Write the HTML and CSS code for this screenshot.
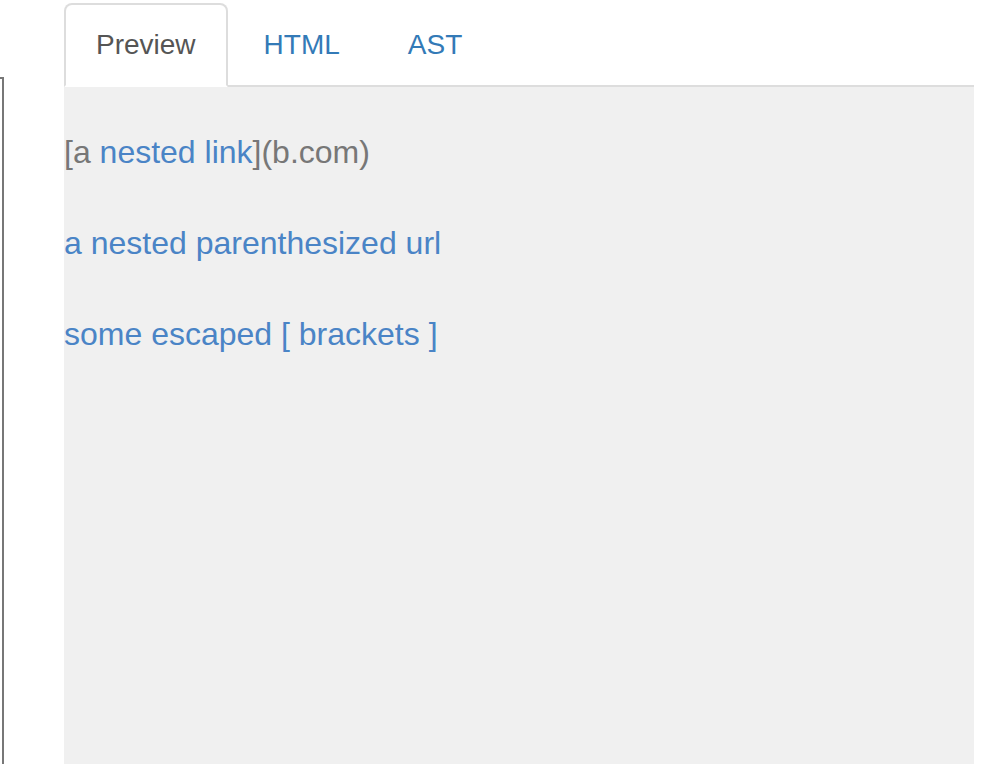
FILE: index.html
```html
<!DOCTYPE html>
<html>
<head>
<meta charset="utf-8">
<link rel="stylesheet" href="styles.css">
</head>
<body>
<div class="page">
  <div class="editor-col">
    <div class="editor"></div>
  </div>
  <div class="output-col">
    <ul class="tabs">
      <li class="tab active"><a>Preview</a></li>
      <li class="tab"><a>HTML</a></li>
      <li class="tab"><a>AST</a></li>
    </ul>
    <div class="panel">
      <p class="muted">[a <a class="link">nested link</a>](b.com)</p>
      <p><a class="link">a nested parenthesized url</a></p>
      <p><a class="link">some escaped [ brackets ]</a></p>
    </div>
  </div>
</div>
</body>
</html>
```
FILE: styles.css
```css
html, body {
  margin: 0;
  padding: 0;
  background: #fff;
  overflow: hidden;
  height: 764px;
}
body {
  font-family: "Liberation Sans", Arial, Helvetica, sans-serif;
  font-size: 28px;
}
.page {
  display: flex;
  padding-top: 3px;
  height: 761px;
  overflow: hidden;
}
.editor-col {
  width: 4px;
  flex: none;
}
.editor {
  margin-top: 74px;
  height: 800px;
  box-sizing: border-box;
  border-top: 2px solid #777;
  border-right: 2px solid #777;
  margin-left: -10px;
  width: 14px;
}
.output-col {
  margin-left: 60px;
  width: 910px;
  flex: none;
}
.tabs {
  list-style: none;
  margin: 0;
  padding: 0;
  display: flex;
  border-bottom: 2px solid #ddd;
}
.tab {
  margin-right: 4px;
  margin-bottom: -2px;
}
.tab a {
  display: block;
  padding: 20px 30px;
  line-height: 40px;
  border: 2px solid transparent;
  border-radius: 8px 8px 0 0;
  color: #337ab7;
}
.tab.active a {
  color: #555;
  background: #fff;
  border-color: #ddd;
  border-bottom-color: transparent;
}
.panel {
  background: #f0f0f0;
  padding-top: 42px;
  height: 700px;
  font-size: 32px;
}
.panel p {
  margin: 0 0 45px;
  line-height: 46px;
}
.muted {
  color: #777;
}
.link {
  color: #4a84c6;
}
```
